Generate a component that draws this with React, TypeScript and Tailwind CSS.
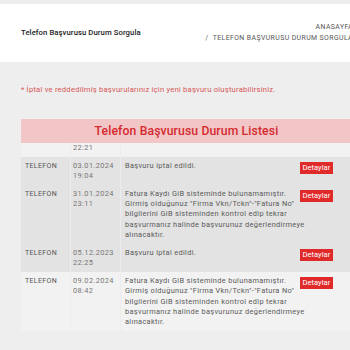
const rows = [
    {
        id: "r0",
        type: "",
        date: ["22:21"],
        text: [] as string[],
        tone: "light",
        partial: true,
    },
    {
        id: "r1",
        type: "TELEFON",
        date: ["03.01.2024", "19:04"],
        text: ["Başvuru iptal edildi."],
        tone: "dark",
        partial: false,
    },
    {
        id: "r2",
        type: "TELEFON",
        date: ["31.01.2024", "23:11"],
        text: [
            "Fatura Kaydı GiB sisteminde bulunamamıştır.",
            "Girmiş olduğunuz \"Firma Vkn/Tckn\"-\"Fatura No\"",
            "bilgilerini GiB sisteminden kontrol edip tekrar",
            "başvurmanız halinde başvurunuz değerlendirmeye",
            "alınacaktır.",
        ],
        tone: "dark",
        partial: false,
    },
    {
        id: "r3",
        type: "TELEFON",
        date: ["05.12.2023", "22:25"],
        text: ["Başvuru iptal edildi."],
        tone: "dark",
        partial: false,
    },
    {
        id: "r4",
        type: "TELEFON",
        date: ["09.02.2024", "08:42"],
        text: [
            "Fatura Kaydı GiB sisteminde bulunamamıştır.",
            "Girmiş olduğunuz \"Firma Vkn/Tckn\"-\"Fatura No\"",
            "bilgilerini GiB sisteminden kontrol edip tekrar",
            "başvurmanız halinde başvurunuz değerlendirmeye",
            "alınacaktır.",
        ],
        tone: "light",
        partial: false,
    },
]

export default function App() {
    return (
        <div className="w-[350px] h-[350px] overflow-hidden bg-[#eeeeee] font-['Roboto',sans-serif]">
            {/* Page header */}
            <header className="mt-[4px] h-[58px] bg-white flex items-center justify-between pl-[21px]">
                <h1 className="text-[7.7px] font-medium text-[#222] tracking-[0.01em]">
                    Telefon Başvurusu Durum Sorgula
                </h1>
                <nav className="flex flex-col items-end -mr-[3px] text-[6.9px] leading-[11px] tracking-[0.06em] text-[#555] whitespace-nowrap pb-[1px]">
                    <span>ANASAYFA</span>
                    <span>/ &nbsp;TELEFON BAŞVURUSU DURUM SORGULA</span>
                </nav>
            </header>

            <p className="mt-[23px] ml-[21px] text-[7.6px] leading-[10px] tracking-[0.03em] text-[#d65656] whitespace-nowrap">
                * İptal ve reddedilmiş başvurularınız için yeni başvuru oluşturabilirsiniz.
            </p>

            {/* List panel */}
            <section className="mt-[24px] ml-[21px] w-[331px]">
                <div className="h-[24px] bg-[#f2c6c6] flex items-center justify-center">
                    <h2 className="text-[12.2px] font-medium text-[#d42a2f] tracking-[0.01em]">
                        Telefon Başvurusu Durum Listesi
                    </h2>
                </div>

                {rows.map(row => (
                    <div
                        key={row.id}
                        className={`grid grid-cols-[50px_50px_175px_1fr] text-[7.4px] leading-[10.3px] ${row.tone === "dark" ? "bg-[#e3e3e3]" : "bg-[#f2f2f2]"}`}
                    >
                        <div className={`pl-[4px] border-r border-[#ececec] text-[#555] text-[7px] tracking-[0.05em] ${row.partial ? "pb-[3.5px]" : "pt-[4px] pb-[3.5px]"}`}>
                            {row.type}
                        </div>
                        <div className={`pl-[2px] border-r border-[#ececec] text-[#777] tracking-[0.05em] flex flex-col ${row.partial ? "pb-[3.5px]" : "pt-[4px] pb-[3.5px]"}`}>
                            {row.date.map(d => (
                                <span key={d}>{d}</span>
                            ))}
                        </div>
                        <div className={`pl-[4px] text-[#5a5a5a] tracking-[0.045em] flex flex-col whitespace-nowrap ${row.partial ? "pb-[3.5px]" : "pt-[4px] pb-[3.5px]"}`}>
                            {row.text.map((t, i) => (
                                <span key={i}>{t}</span>
                            ))}
                        </div>
                        <div className="pl-[4px] pt-[5px]">
                            {!row.partial && (
                                <button className="bg-[#e02a2a] text-white text-[7.6px] leading-[12px] h-[12px] px-[2.5px] tracking-normal">
                                    Detaylar
                                </button>
                            )}
                        </div>
                    </div>
                ))}
            </section>
        </div>
    )
}
